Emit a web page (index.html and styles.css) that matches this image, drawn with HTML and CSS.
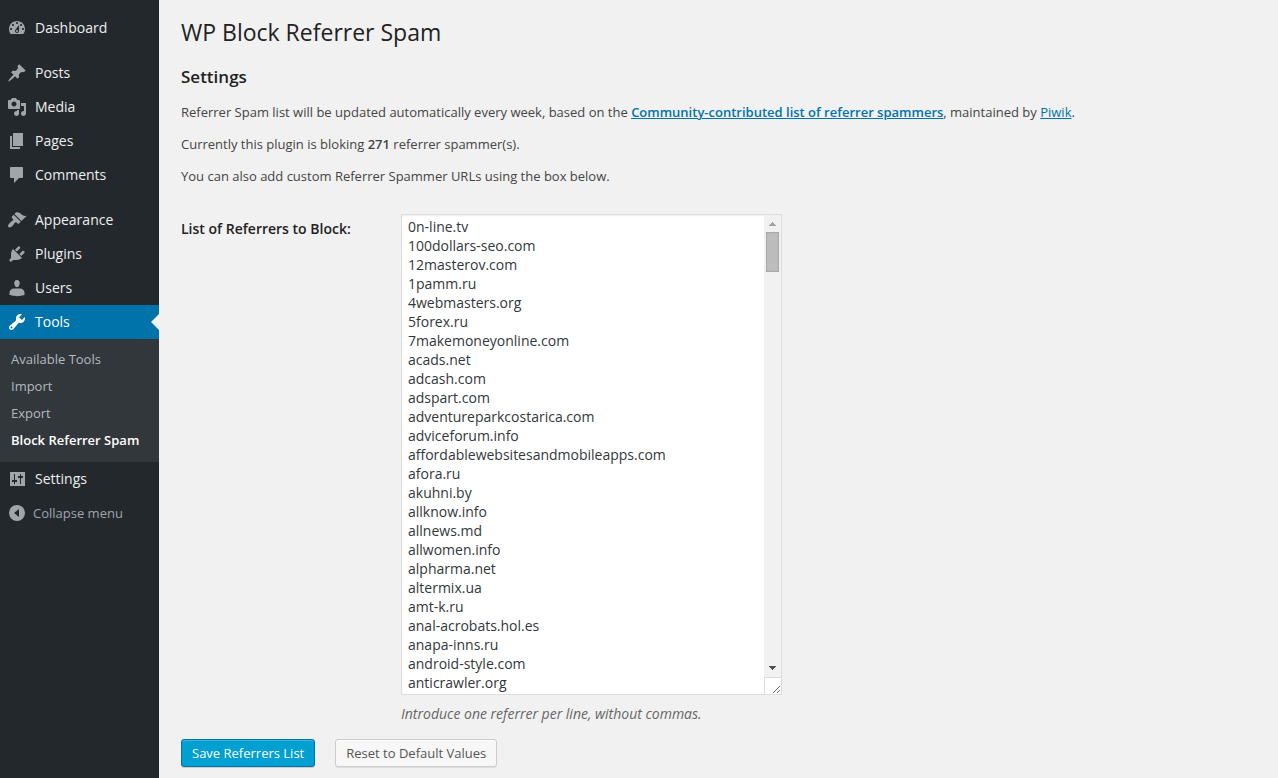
FILE: index.html
```
<!DOCTYPE html>
<html lang="en">
<head>
<meta charset="utf-8">
<title>WP Block Referrer Spam</title>
<link rel="stylesheet" href="styles.css">
</head>
<body>
<div class="layout">
  <nav class="sidebar" aria-label="Main menu">
    <ul class="menu">
      <li><a class="menu-item" href="#"><svg class="icon" viewBox="0 0 20 20"><path d="M3.76 16h12.48c1.1-1.37 1.76-3.11 1.76-5 0-4.42-3.58-8-8-8s-8 3.58-8 8c0 1.89.66 3.63 1.76 5zM10 4c.55 0 1 .45 1 1s-.45 1-1 1-1-.45-1-1 .45-1 1-1zM6 6c.55 0 1 .45 1 1s-.45 1-1 1-1-.45-1-1 .45-1 1-1zm8 0c.55 0 1 .45 1 1s-.45 1-1 1-1-.45-1-1 .45-1 1-1zm-5.37 5.55L12 7v6c0 1.1-.9 2-2 2s-2-.9-2-2c0-.57.24-1.08.63-1.45zM4 10c.55 0 1 .45 1 1s-.45 1-1 1-1-.45-1-1 .45-1 1-1zm12 0c.55 0 1 .45 1 1s-.45 1-1 1-1-.45-1-1 .45-1 1-1zm-5 3c0-.55-.45-1-1-1s-1 .45-1 1 .45 1 1 1 1-.45 1-1z"/></svg>Dashboard</a></li>
      <li class="group-start"><a class="menu-item" href="#"><svg class="icon" viewBox="0 0 20 20"><path d="M10.44 3.02l1.82-1.82 6.36 6.35-1.83 1.82c-1.05-.68-2.48-.57-3.41.36l-.75.75c-.92.93-1.04 2.35-.35 3.41l-1.83 1.82-2.41-2.41-2.8 2.79c-.42.42-3.38 2.71-3.8 2.29s1.86-3.39 2.28-3.81l2.79-2.79L4.1 9.36l1.83-1.82c1.05.69 2.48.57 3.4-.36l.75-.75c.93-.92 1.05-2.35.36-3.41z"/></svg>Posts</a></li>
      <li><a class="menu-item" href="#"><svg class="icon" viewBox="0 0 20 20"><path d="M13 11V4c0-.55-.45-1-1-1h-1.67L9 1H5L3.67 3H2c-.55 0-1 .45-1 1v7c0 .55.45 1 1 1h10c.55 0 1-.45 1-1zM7 4.5c1.38 0 2.5 1.12 2.5 2.5S8.38 9.5 7 9.5 4.5 8.38 4.5 7 5.62 4.5 7 4.5zM14 6h5v10.5c0 1.38-1.12 2.5-2.5 2.5S14 17.88 14 16.5s1.12-2.5 2.5-2.5c.17 0 .34.02.5.05V9h-3V6zm-4 8.05V13h2v3.5c0 1.38-1.12 2.5-2.5 2.5S7 17.88 7 16.5 8.12 14 9.5 14c.17 0 .34.02.5.05z"/></svg>Media</a></li>
      <li><a class="menu-item" href="#"><svg class="icon" viewBox="0 0 20 20"><path d="M6 15V2h10v13H6zm-1 1h8v2H3V5h2v11z"/></svg>Pages</a></li>
      <li><a class="menu-item" href="#"><svg class="icon" viewBox="0 0 20 20"><path d="M4 2h11c.55 0 1 .45 1 1v9c0 .55-.45 1-1 1h-3l-5 5v-5H4c-.55 0-1-.45-1-1V3c0-.55.45-1 1-1z"/></svg>Comments</a></li>
      <li class="group-start"><a class="menu-item" href="#"><svg class="icon" viewBox="0 0 20 20"><path d="M14.48 11.06L7.41 3.99l1.5-1.5c.5-.56 2.3-.47 3.51.32 1.21.8 1.43 1.28 2.91 2.1 1.18.64 2.45 1.26 4.45.85zm-.71.71L6.7 4.7 4.93 6.47c-.39.39-.39 1.02 0 1.41l1.06 1.06c.39.39.39 1.03 0 1.42-.6.6-1.43 1.11-2.21 1.69-.35.26-.7.53-1.01.84C1.43 14.23.4 16.08 1.4 17.07c.99 1 2.84-.03 4.18-1.36.31-.31.58-.66.85-1.02.57-.78 1.08-1.61 1.69-2.21.39-.39 1.02-.39 1.41 0l1.06 1.06c.39.39 1.02.39 1.41 0z"/></svg>Appearance</a></li>
      <li><a class="menu-item" href="#"><svg class="icon" viewBox="0 0 20 20"><path d="M13.11 4.36L9.87 7.6 8 5.73l3.24-3.24c.35-.34 1.05-.2 1.56.32.52.51.66 1.21.31 1.55zm-8 1.77l.91-1.12 9.01 9.01-1.19.84c-.71.71-2.63 1.16-3.82 1.16H6.14L4.9 17.26c-.59.59-1.54.59-2.12 0-.59-.58-.59-1.53 0-2.12l1.24-1.24v-3.88c0-1.13.4-3.19 1.09-3.89zm7.26 3.97l3.24-3.24c.34-.35 1.04-.21 1.55.31.52.51.66 1.21.31 1.55l-3.24 3.25z"/></svg>Plugins</a></li>
      <li><a class="menu-item" href="#"><svg class="icon" viewBox="0 0 20 20"><path d="M10 9.25c-2.27 0-2.73-3.44-2.73-3.44C7 4.02 7.82 2 9.97 2c2.16 0 2.98 2.02 2.71 3.81 0 0-.41 3.44-2.68 3.44zM7 10.500h6c2.400 0 4.500 1.800 4.500 4v2.500s-3.800 1.150-7.500 1.150S2.500 17 2.500 17v-2.500c0-2.200 2.100-4 4.500-4z"/></svg>Users</a></li>
      <li>
        <a class="menu-item current" href="#"><svg class="icon" viewBox="0 0 20 20"><path d="M16.68 9.77c-1.34 1.34-3.3 1.67-4.95.99l-5.41 6.52c-.99.99-2.59.99-3.58 0s-.99-2.59 0-3.57l6.52-5.42c-.68-1.65-.35-3.61.99-4.95 1.28-1.28 3.12-1.62 4.72-1.06l-2.89 2.89 2.82 2.82 2.86-2.87c.53 1.58.18 3.39-1.08 4.65zM3.81 16.21c.4.39 1.04.39 1.43 0 .4-.4.4-1.04 0-1.43-.39-.4-1.03-.4-1.43 0-.39.39-.39 1.03 0 1.43z"/></svg>Tools</a>
        <ul class="submenu">
          <li><a href="#">Available Tools</a></li>
          <li><a href="#">Import</a></li>
          <li><a href="#">Export</a></li>
          <li><a class="active" href="#">Block Referrer Spam</a></li>
        </ul>
      </li>
      <li><a class="menu-item" href="#"><svg class="icon" viewBox="0 0 20 20"><path fill-rule="evenodd" d="M3 3h15v14H3zM7 5v6H5v2h2v2h1v-2h2v-2H8V5zM13 5v2h-2v2h2v6h1V9h2V7h-2V5z"/></svg>Settings</a></li>
      <li><button class="collapse" type="button"><svg class="icon" viewBox="0 0 20 20"><path fill-rule="evenodd" d="M10 2a8 8 0 1 1 0 16a8 8 0 0 1 0-16zM12 6l-5 4l5 4z"/></svg>Collapse menu</button></li>
    </ul>
  </nav>

  <main class="content">
    <h1>WP Block Referrer Spam</h1>
    <h2>Settings</h2>
    <p>Referrer Spam list will be updated automatically every week, based on the <a href="#"><strong>Community-contributed list of referrer spammers</strong></a>, maintained by <a href="#">Piwik</a>.</p>
    <p>Currently this plugin is bloking <strong>271</strong> referrer spammer(s).</p>
    <p>You can also add custom Referrer Spammer URLs using the box below.</p>

    <form class="form">
      <div class="field">
        <label for="referrers">List of Referrers to Block:</label>
        <div class="control">
          <div class="list-box">
            <textarea id="referrers" rows="25" spellcheck="false">0n-line.tv
100dollars-seo.com
12masterov.com
1pamm.ru
4webmasters.org
5forex.ru
7makemoneyonline.com
acads.net
adcash.com
adspart.com
adventureparkcostarica.com
adviceforum.info
affordablewebsitesandmobileapps.com
afora.ru
akuhni.by
allknow.info
allnews.md
allwomen.info
alpharma.net
altermix.ua
amt-k.ru
anal-acrobats.hol.es
anapa-inns.ru
android-style.com
anticrawler.org</textarea>
            <div class="scrollbar" aria-hidden="true">
              <svg class="arrow up" viewBox="0 0 17 17" shape-rendering="crispEdges"><path d="M8 7h1v1h1v1h1v1h1v1H5v-1h1V9h1V8h1z"/></svg>
              <div class="thumb"></div>
              <svg class="arrow down" viewBox="0 0 17 17" shape-rendering="crispEdges"><path d="M5 6h7v1h-1v1h-1v1H9v1H8V9H7V8H6V7H5z"/></svg>
              <div class="corner"></div>
            </div>
          </div>
          <p class="hint">Introduce one referrer per line, without commas.</p>
        </div>
      </div>
      <div class="actions">
        <button class="button primary" type="submit">Save Referrers List</button>
        <button class="button" type="reset">Reset to Default Values</button>
      </div>
    </form>
  </main>
</div>
</body>
</html>
```
FILE: styles.css
```
* {
  box-sizing: border-box;
}

body {
  margin: 0;
  background: #f1f1f1;
  color: #444;
  font: 13px/20px "Open Sans", sans-serif;
}

.layout {
  display: flex;
  min-height: 100vh;
}

/* Sidebar */
.sidebar {
  flex: none;
  width: 159px;
  padding-top: 11px;
  background: #23282d;
}

.menu,
.submenu {
  margin: 0;
  padding: 0;
  list-style: none;
}

.group-start {
  margin-top: 11px;
}

.menu-item,
.collapse {
  display: flex;
  align-items: center;
  gap: 8px;
  height: 34px;
  padding: 0 7px;
  color: #eee;
  font-size: 14px;
  text-decoration: none;
}

.icon {
  flex: none;
  width: 20px;
  height: 20px;
  fill: #a0a5aa;
}

.current {
  position: relative;
  background: #0073aa;
  color: #fff;
}

.current .icon {
  fill: #fff;
}

.current::after {
  content: "";
  position: absolute;
  top: 9px;
  right: 0;
  border: 8px solid transparent;
  border-left: 0;
  border-right-color: #f1f1f1;
}

.submenu {
  padding: 7px 0 8px;
  background: #32373c;
}

.submenu a {
  display: block;
  padding: 3px 11px 4px;
  color: #b4b9be;
  text-decoration: none;
  white-space: nowrap;
}

.submenu .active {
  color: #fff;
  font-weight: 600;
}

.collapse {
  gap: 6px;
  width: 100%;
  border: 0;
  background: none;
  color: #a0a5aa;
  font-family: inherit;
  font-size: 13px;
}

/* Content */
.content {
  flex: 1;
  min-width: 0;
  padding: 18px 20px 8px 22px;
}

h1 {
  margin: 0;
  color: #222;
  font-size: 23px;
  font-weight: 400;
  line-height: 29px;
}

h2 {
  margin: 20px 0 15px;
  color: #222;
  font-size: 17px;
  font-weight: 600;
  line-height: 20px;
}

p {
  margin: 0 0 12px;
}

strong {
  font-weight: 600;
}

a {
  color: #0073aa;
}

.field {
  display: flex;
  padding-top: 16px;
}

.field label {
  flex: none;
  width: 220px;
  padding-top: 5px;
  color: #222;
  font-size: 14px;
  font-weight: 600;
}

.control {
  flex: 0 1 381px;
  min-width: 0;
}

.list-box {
  position: relative;
}

textarea {
  display: block;
  width: 100%;
  padding: 2px 6px;
  border: 1px solid #ddd;
  border-radius: 0;
  outline: 0;
  background: #fff;
  box-shadow: inset 0 1px 2px rgba(0, 0, 0, 0.07);
  color: #32373c;
  font: 14px/19px "Open Sans", sans-serif;
  resize: vertical;
}

/* Scroll bar laid over the right edge of the text box */
.scrollbar {
  position: absolute;
  top: 1px;
  right: 1px;
  bottom: 1px;
  display: flex;
  flex-direction: column;
  width: 17px;
  background: linear-gradient(#f1f1f1, #f1f1f1) no-repeat 0 0 / 100% calc(100% - 17px);
  pointer-events: none;
}

.arrow {
  flex: none;
  width: 17px;
  height: 17px;
}

.up {
  fill: #a3a3a3;
}

.down {
  margin-top: auto;
  fill: #505050;
}

.thumb {
  height: 40px;
  margin: 0 2px;
  border: 1px solid #a8a8a8;
  background: #bcbcbc;
}

.corner {
  flex: none;
  height: 17px;
  border: 1px solid #dcdcdc;
  border-width: 1px 0 0 1px;
}

.hint {
  margin: 9px 0 0;
  color: #666;
  font-size: 14px;
  font-style: italic;
}

.actions {
  display: flex;
  gap: 20px;
  padding-top: 15px;
}

.button {
  height: 28px;
  padding: 0 10px;
  border: 1px solid #ccc;
  border-radius: 3px;
  background: #f7f7f7;
  box-shadow: inset 0 1px 0 #fff, 0 1px 0 rgba(0, 0, 0, 0.08);
  color: #555;
  font: 13px/26px "Open Sans", sans-serif;
  white-space: nowrap;
}

.primary {
  border-color: #0073aa;
  background: #00a0d2;
  box-shadow: inset 0 1px 0 rgba(120, 200, 230, 0.5), 0 1px 0 rgba(0, 0, 0, 0.15);
  color: #fff;
}
```
